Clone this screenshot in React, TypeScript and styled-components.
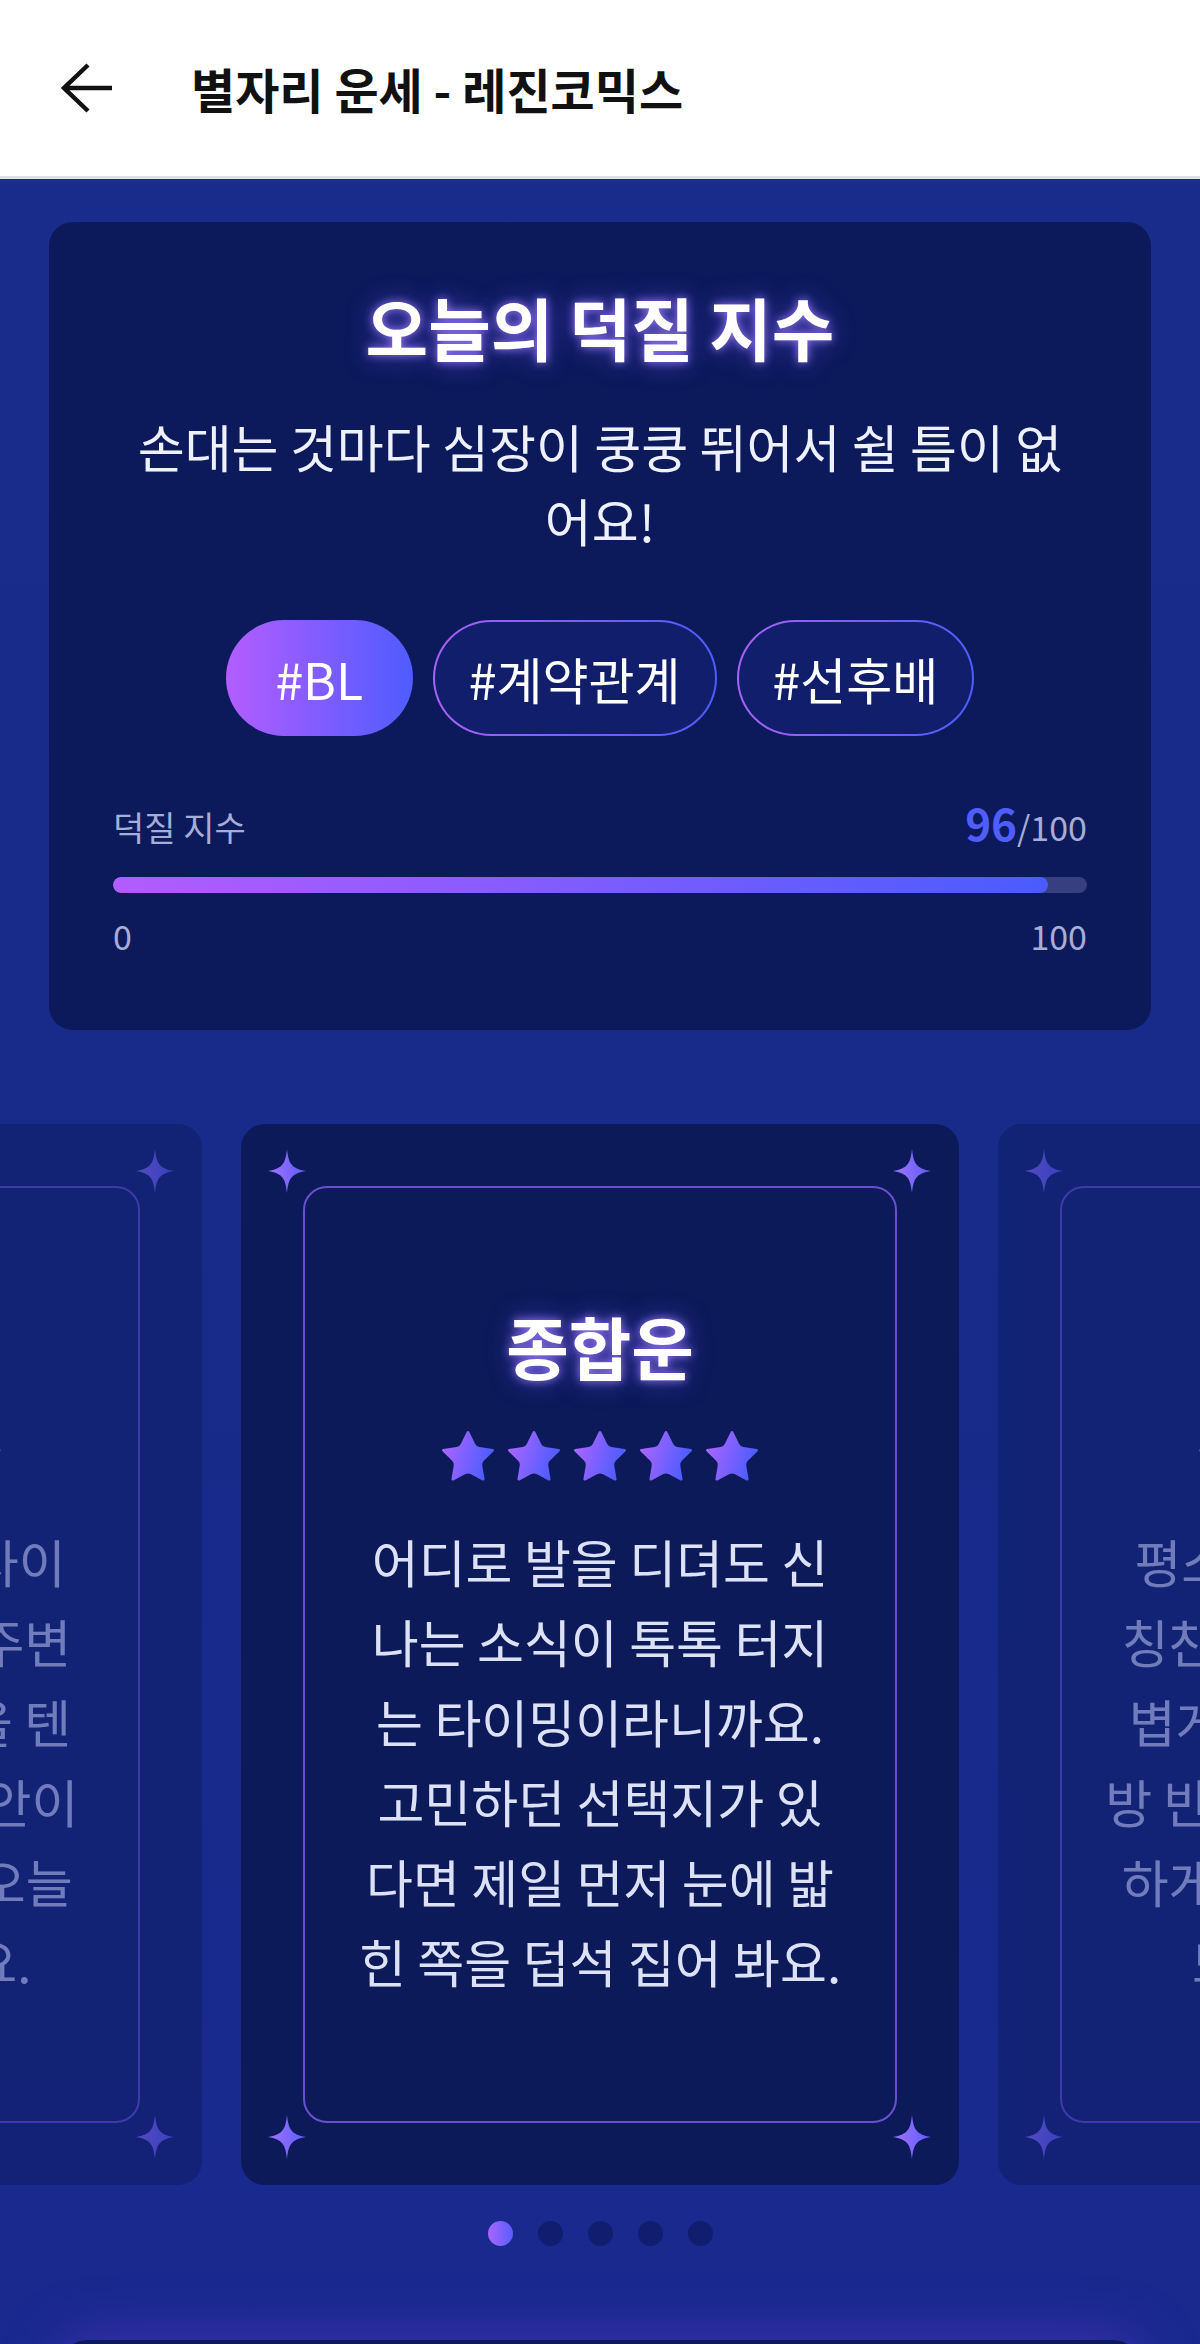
import React, { FC } from "react";
import styled, { createGlobalStyle } from "styled-components";

const GlobalStyle = createGlobalStyle`
  html, body {
    margin: 0;
    padding: 0;
  }
  body {
    background: #182a8a;
    font-family: "Noto Sans CJK KR", "Noto Sans", sans-serif;
  }
  * {
    box-sizing: border-box;
  }
`;

export const PageEl = styled.div`
  width: 1200px;
  min-height: 2344px;
  background: linear-gradient(180deg, #1a2c8c 0%, #172a8a 55%, #1a2890 100%);
  overflow: hidden;
`;

export const HeaderEl = styled.header`
  height: 179px;
  background: #ffffff;
  border-bottom: 3px solid #dde0ee;
  display: flex;
  align-items: center;
  gap: 78px;
  padding-left: 61px;
`;

export const HeaderTitleEl = styled.h1`
  margin: 0;
  font-size: 48px;
  font-weight: 700;
  color: #111111;
`;

export const TopSectionEl = styled.section`
  padding: 43px 49px 0;
`;

export const IndexCardEl = styled.div`
  background: #0c1a5c;
  border-radius: 24px;
  padding: 66px 64px 73px;
  text-align: center;
`;

export const GlowTitleEl = styled.h2<{ $lh: number }>`
  margin: 0;
  font-size: 68px;
  line-height: ${(p) => p.$lh}px;
  font-weight: 700;
  color: #ffffff;
  text-shadow: 0 0 10px rgba(160, 130, 255, 0.95), 0 0 24px rgba(120, 90, 255, 0.6);
`;

export const SubTextEl = styled.p`
  margin: 43px 0 0;
  padding: 0 15px;
  font-size: 51px;
  line-height: 74px;
  color: #eef0fb;
`;

export const TagRowEl = styled.div`
  margin-top: 63px;
  display: flex;
  justify-content: center;
  gap: 20px;
`;

export const TagEl = styled.span<{ $active?: boolean }>`
  height: 116px;
  min-width: 187px;
  display: flex;
  align-items: center;
  justify-content: center;
  padding: 0 34px;
  border-radius: 58px;
  font-size: 50px;
  font-weight: 400;
  color: #ffffff;
  border: 2px solid transparent;
  background: ${(p) =>
    p.$active
      ? "linear-gradient(90deg, #b35dff, #4f5cff) border-box"
      : "linear-gradient(#101e6c, #101e6c) padding-box, linear-gradient(90deg, #a862f5, #4d5cff) border-box"};
`;

export const ScoreRowEl = styled.div`
  margin-top: 62px;
  display: flex;
  justify-content: space-between;
  align-items: baseline;
  line-height: 48px;
`;

export const MutedEl = styled.span<{ $size: number }>`
  font-size: ${(p) => p.$size}px;
  color: #a7aed6;
`;

export const ScoreEl = styled.span`
  font-size: 44px;
  font-weight: 700;
  color: #4f5dff;
`;

export const BarTrackEl = styled.div`
  margin-top: 19px;
  height: 16px;
  border-radius: 8px;
  background: #383f80;
  overflow: hidden;
`;

export const BarFillEl = styled.div`
  height: 100%;
  border-radius: 8px;
  background: linear-gradient(90deg, #b35cff, #4a5cff);
`;

export const ScaleRowEl = styled.div`
  margin-top: 22px;
  display: flex;
  justify-content: space-between;
  line-height: 42px;
`;

export const CarouselEl = styled.div`
  margin-top: 94px;
  display: flex;
  justify-content: center;
  gap: 39px;
  overflow: hidden;
`;

export const FortuneCardEl = styled.div<{ $faded?: boolean }>`
  position: relative;
  flex-shrink: 0;
  width: 718px;
  height: 1061px;
  padding: 62px;
  border-radius: 24px;
  background: #0c1a5a;
  opacity: ${(p) => (p.$faded ? 0.45 : 1)};
`;

export const FrameEl = styled.div`
  height: 100%;
  border: 2px solid #6b4fd0;
  border-radius: 24px;
  display: flex;
  flex-direction: column;
  align-items: center;
  justify-content: center;
  text-align: center;
`;

export const SparkleEl = styled.svg<{ $top: boolean; $left: boolean }>`
  position: absolute;
  width: 38px;
  height: 44px;
  ${(p) => (p.$top ? "top: 25px;" : "bottom: 26px;")}
  ${(p) => (p.$left ? "left: 27px;" : "right: 28px;")}
`;

export const StarRowEl = styled.div`
  margin-top: 48px;
  display: flex;
  gap: 12px;
`;

export const BodyTextEl = styled.p`
  margin: 37px 0 0;
  font-size: 51px;
  line-height: 80px;
  color: #dde1f6;
  white-space: nowrap;
`;

export const DotsEl = styled.div`
  margin-top: 36px;
  display: flex;
  justify-content: center;
  gap: 25px;
`;

export const DotEl = styled.span<{ $active?: boolean }>`
  width: 25px;
  height: 25px;
  border-radius: 50%;
  background: ${(p) =>
    p.$active ? "linear-gradient(90deg, #a865ff, #5a5cff)" : "rgba(10, 18, 80, 0.5)"};
`;

export const NextCardEl = styled.div`
  margin: 94px auto 0;
  width: 1075px;
  height: 320px;
  border-radius: 24px;
  background: #0c1a5c;
  box-shadow: 0 0 60px rgba(120, 60, 220, 0.45);
`;

interface IFortune {
  title: string;
  lines: string[];
  faded?: boolean;
}

const fortunes: IFortune[] = [
  {
    title: "애정운",
    faded: true,
    lines: [
      "멀어진 친구와의 사이",
      "이 풀리는 날이라 주변",
      "에서도 응원을 받을 텐",
      "데, 작은 걱정과 불안이",
      "말끔히 사라져요. 오늘",
      "은 먼저 웃어 봐요.",
    ],
  },
  {
    title: "종합운",
    lines: [
      "어디로 발을 디뎌도 신",
      "나는 소식이 톡톡 터지",
      "는 타이밍이라니까요.",
      "고민하던 선택지가 있",
      "다면 제일 먼저 눈에 밟",
      "힌 쪽을 덥석 집어 봐요.",
    ],
  },
  {
    title: "대인운",
    faded: true,
    lines: [
      "평소 아끼던 사람에게",
      "칭찬을 건네 보세요. 가",
      "볍게 건넨 진심이 상대",
      "방 반응으로 돌아와 뿌듯",
      "하게 웃을 일이 생겨요.",
      "또 한 번 웃어요.",
    ],
  },
];

const tags: string[] = ["#BL", "#계약관계", "#선후배"];

const BackArrow: FC = () => (
  <svg width="52" height="50" viewBox="0 0 52 50" fill="none">
    <path d="M51 25H3M27 2L3 25L27 48" stroke="#111111" strokeWidth="4.5" />
  </svg>
);

const Sparkle: FC<{ id: string; top: boolean; left: boolean }> = ({ id, top, left }) => (
  <SparkleEl $top={top} $left={left} viewBox="0 0 38 44">
    <defs>
      <linearGradient id={id} x1="0" y1="0" x2="1" y2="0">
        <stop offset="0" stopColor="#a273ff" />
        <stop offset="1" stopColor="#5d5cff" />
      </linearGradient>
    </defs>
    <path
      d="M19 0C20.5 14 23 19.5 38 22C23 24.5 20.5 30 19 44C17.5 30 15 24.5 0 22C15 19.5 17.5 14 19 0Z"
      fill={`url(#${id})`}
    />
  </SparkleEl>
);

const Star: FC<{ id: string }> = ({ id }) => (
  <svg width="54" height="54" viewBox="1.6 1.6 20.8 20.8">
    <defs>
      <linearGradient id={id} x1="0" y1="0" x2="1" y2="0.3">
        <stop offset="0" stopColor="#b566ff" />
        <stop offset="1" stopColor="#4f5cff" />
      </linearGradient>
    </defs>
    <path
      d="M11.525 2.295a.53.53 0 0 1 .95 0l2.31 4.679a2.123 2.123 0 0 0 1.595 1.16l5.166.756a.53.53 0 0 1 .294.904l-3.736 3.638a2.123 2.123 0 0 0-.611 1.878l.882 5.14a.53.53 0 0 1-.771.56l-4.618-2.428a2.122 2.122 0 0 0-1.973 0L6.396 21.01a.53.53 0 0 1-.77-.56l.881-5.139a2.122 2.122 0 0 0-.611-1.879L2.16 9.795a.53.53 0 0 1 .294-.906l5.165-.755a2.122 2.122 0 0 0 1.597-1.16z"
      fill={`url(#${id})`}
    />
  </svg>
);

const FortuneCard: FC<{ fortune: IFortune; index: number }> = ({ fortune, index }) => (
  <FortuneCardEl $faded={fortune.faded}>
    {[
      [true, true],
      [true, false],
      [false, true],
      [false, false],
    ].map(([top, left], i) => (
      <Sparkle key={i} id={`sp-${index}-${i}`} top={top} left={left} />
    ))}
    <FrameEl>
      <GlowTitleEl $lh={73}>{fortune.title}</GlowTitleEl>
      <StarRowEl>
        {[0, 1, 2, 3, 4].map((s) => (
          <Star key={s} id={`st-${index}-${s}`} />
        ))}
      </StarRowEl>
      <BodyTextEl>
        {fortune.lines.map((line, i) => (
          <React.Fragment key={i}>
            {line}
            {i < fortune.lines.length - 1 && <br />}
          </React.Fragment>
        ))}
      </BodyTextEl>
    </FrameEl>
  </FortuneCardEl>
);

const App: FC = () => {
  const score = 96;
  return (
    <>
      <GlobalStyle />
      <PageEl>
        <HeaderEl>
          <BackArrow />
          <HeaderTitleEl>별자리 운세 - 레진코믹스</HeaderTitleEl>
        </HeaderEl>

        <TopSectionEl>
          <IndexCardEl>
            <GlowTitleEl $lh={78}>오늘의 덕질 지수</GlowTitleEl>
            <SubTextEl>손대는 것마다 심장이 쿵쿵 뛰어서 쉴 틈이 없어요!</SubTextEl>
            <TagRowEl>
              {tags.map((tag, i) => (
                <TagEl key={tag} $active={i === 0}>
                  {tag}
                </TagEl>
              ))}
            </TagRowEl>
            <ScoreRowEl>
              <MutedEl $size={34}>덕질 지수</MutedEl>
              <span>
                <ScoreEl>{score}</ScoreEl>
                <MutedEl $size={34}>/100</MutedEl>
              </span>
            </ScoreRowEl>
            <BarTrackEl>
              <BarFillEl style={{ width: `${score}%` }} />
            </BarTrackEl>
            <ScaleRowEl>
              <MutedEl $size={34}>0</MutedEl>
              <MutedEl $size={34}>100</MutedEl>
            </ScaleRowEl>
          </IndexCardEl>
        </TopSectionEl>

        <CarouselEl>
          {fortunes.map((f, i) => (
            <FortuneCard key={f.title} fortune={f} index={i} />
          ))}
        </CarouselEl>

        <DotsEl>
          {[0, 1, 2, 3, 4].map((d) => (
            <DotEl key={d} $active={d === 0} />
          ))}
        </DotsEl>

        <NextCardEl />
      </PageEl>
    </>
  );
};

export default App;
